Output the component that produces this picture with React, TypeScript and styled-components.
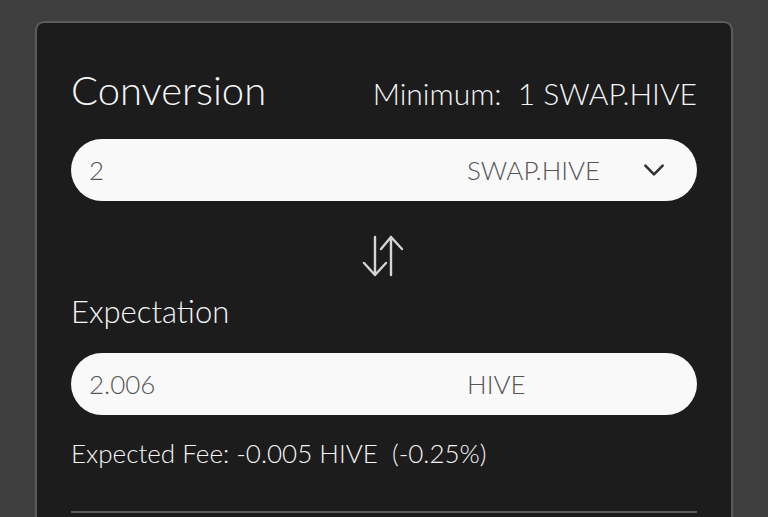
import styled, { createGlobalStyle } from "styled-components";

const GlobalStyle = createGlobalStyle`
  html, body {
    margin: 0;
    padding: 0;
    background: #3f3f3f;
    font-family: Lato, "Open Sans", sans-serif;
    font-weight: 300;
  }
`;

const Page = styled.div`
  width: 768px;
  height: 517px;
  overflow: hidden;
  padding: 21px 35px 0 35px;
  box-sizing: border-box;
`;

const Card = styled.div`
  background: #1c1c1c;
  border: 2px solid #5c5c5c;
  border-bottom: none;
  border-radius: 9px 9px 0 0;
  padding: 40px 34px 0 34px;
  height: 520px;
  box-sizing: border-box;
  color: #f5f5f5;
`;

const Header = styled.div`
  display: flex;
  justify-content: space-between;
  align-items: baseline;
  margin-bottom: 22px;
`;

const Title = styled.h2`
  margin: 0;
  font-size: 40px;
  font-weight: 300;
  line-height: 54px;
`;

const Minimum = styled.span`
  font-size: 30px;
  font-weight: 300;
  white-space: pre;
`;

const Field = styled.div`
  display: flex;
  align-items: center;
  height: 62px;
  background: #f9f9f9;
  border-radius: 31px;
  padding: 0 30px 0 18px;
  color: #555;
  font-size: 26px;
`;

const Value = styled.span`
  width: 378px;
`;

const Token = styled.span`
  flex: 1;
`;

const Chevron = styled.svg`
  width: 26px;
  height: 26px;
`;

const SwapRow = styled.div`
  display: flex;
  justify-content: center;
  padding: 34px 0 14px;
`;

const Label = styled.div`
  font-size: 31px;
  line-height: 40px;
  margin-bottom: 22px;
`;

const Fee = styled.div`
  font-size: 26px;
  margin-top: 22px;
  white-space: pre;
`;

const Divider = styled.hr`
  border: none;
  height: 2px;
  background: #5c5c5c;
  margin: 42px 0 0;
`;

export default function App() {
  return (
    <Page>
      <GlobalStyle />
      <Card>
        <Header>
          <Title>Conversion</Title>
          <Minimum>Minimum:  1 SWAP.HIVE</Minimum>
        </Header>
        <Field>
          <Value>2</Value>
          <Token>SWAP.HIVE</Token>
          <Chevron viewBox="0 0 24 24" fill="none" stroke="#333" strokeWidth={2.4} strokeLinecap="round" strokeLinejoin="round">
            <path d="M4 8l8 8 8-8" />
          </Chevron>
        </Field>
        <SwapRow>
          <svg width="46" height="42" viewBox="0 0 46 42" fill="none" stroke="#d4d4d4" strokeWidth={2.4} strokeLinecap="round" strokeLinejoin="round">
            <path d="M14 2v38M3 28l11 12 11-12" />
            <path d="M30 40V2M20 14L30 2l11 12" />
          </svg>
        </SwapRow>
        <Label>Expectation</Label>
        <Field>
          <Value>2.006</Value>
          <Token>HIVE</Token>
        </Field>
        <Fee>Expected Fee: -0.005 HIVE  (-0.25%)</Fee>
        <Divider />
      </Card>
    </Page>
  );
}
